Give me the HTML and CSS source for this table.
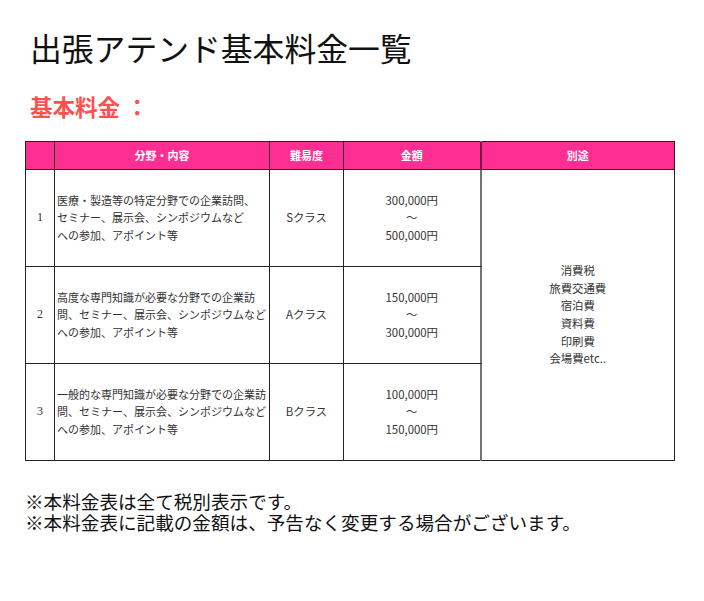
FILE: index.html
```html
<!DOCTYPE html>
<html lang="ja">
<head>
<meta charset="utf-8">
<title>出張アテンド基本料金一覧</title>
<link rel="stylesheet" href="styles.css">
</head>
<body>
<div class="page">
  <h1 class="title">出張アテンド基本料金一覧</h1>
  <h2 class="subtitle">基本料金<span class="colon">：</span></h2>
  <table class="price">
    <colgroup>
      <col class="c-no">
      <col class="c-field">
      <col class="c-level">
      <col class="c-price">
      <col class="c-extra">
    </colgroup>
    <thead>
      <tr>
        <th></th>
        <th>分野・内容</th>
        <th>難易度</th>
        <th>金額</th>
        <th class="sep">別途</th>
      </tr>
    </thead>
    <tbody>
      <tr>
        <td class="no">1</td>
        <td class="field">医療・製造等の特定分野での企業訪問、<br>セミナー、展示会、シンポジウムなど<br>への参加、アポイント等</td>
        <td class="center">Sクラス</td>
        <td class="center">300,000円<br>～<br>500,000円</td>
        <td class="center sep" rowspan="3">消費税<br>旅費交通費<br>宿泊費<br>資料費<br>印刷費<br>会場費etc..</td>
      </tr>
      <tr>
        <td class="no">2</td>
        <td class="field">高度な専門知識が必要な分野での企業訪<br>問、セミナー、展示会、シンポジウムなど<br>への参加、アポイント等</td>
        <td class="center">Aクラス</td>
        <td class="center">150,000円<br>～<br>300,000円</td>
      </tr>
      <tr>
        <td class="no">3</td>
        <td class="field">一般的な専門知識が必要な分野での企業訪<br>問、セミナー、展示会、シンポジウムなど<br>への参加、アポイント等</td>
        <td class="center">Bクラス</td>
        <td class="center">100,000円<br>～<br>150,000円</td>
      </tr>
    </tbody>
  </table>
  <div class="notes">
    <p>※本料金表は全て税別表示です。</p>
    <p>※本料金表に記載の金額は、予告なく変更する場合がございます。</p>
  </div>
</div>
</body>
</html>
```

FILE: styles.css
```css
html, body {
  margin: 0;
  padding: 0;
  background: #fff;
}
body {
  font-family: "Noto Sans CJK JP", "Noto Sans", sans-serif;
  color: #111;
}
.page {
  padding: 28px 0 0 25px;
}
.title {
  margin: 0 0 0 5px;
  font-size: 31.8px;
  font-weight: 400;
  line-height: 38px;
  color: #111;
}
.subtitle {
  margin: 27px 0 0 5px;
  font-size: 22.5px;
  font-weight: 700;
  line-height: 26px;
  color: #ff4f4f;
}
.subtitle .colon {
  padding-left: 6px;
}
.price {
  margin-top: 22px;
  width: 649px;
  border-collapse: collapse;
  table-layout: fixed;
  font-size: 11.4px;
  color: #333;
}
.c-no { width: 29px; }
.c-field { width: 215px; }
.c-level { width: 74px; }
.c-price { width: 137px; }
.c-extra { width: 194px; }
.price th, .price td {
  border: 1px solid #222;
  padding: 0 2px;
  line-height: 17.6px;
}
.price th {
  background: #ff2e93;
  color: #fff;
  font-weight: 700;
  font-size: 11px;
  height: 27px;
  text-align: center;
}
.price tbody tr { height: 97px; }
.price td.no {
  text-align: center;
  font-family: "Liberation Serif", serif;
  font-size: 12px;
}
.price td.field {
  text-align: left;
  white-space: nowrap;
  padding-left: 2px;
  font-size: 11px;
}
.price td.center {
  text-align: center;
}
.price .sep {
  border-left: 2px solid rgba(0, 0, 0, 0.55);
}
.notes {
  margin-top: 29px;
  font-size: 18.6px;
  line-height: 21px;
  color: #111;
}
.notes p {
  margin: 0;
}
```
